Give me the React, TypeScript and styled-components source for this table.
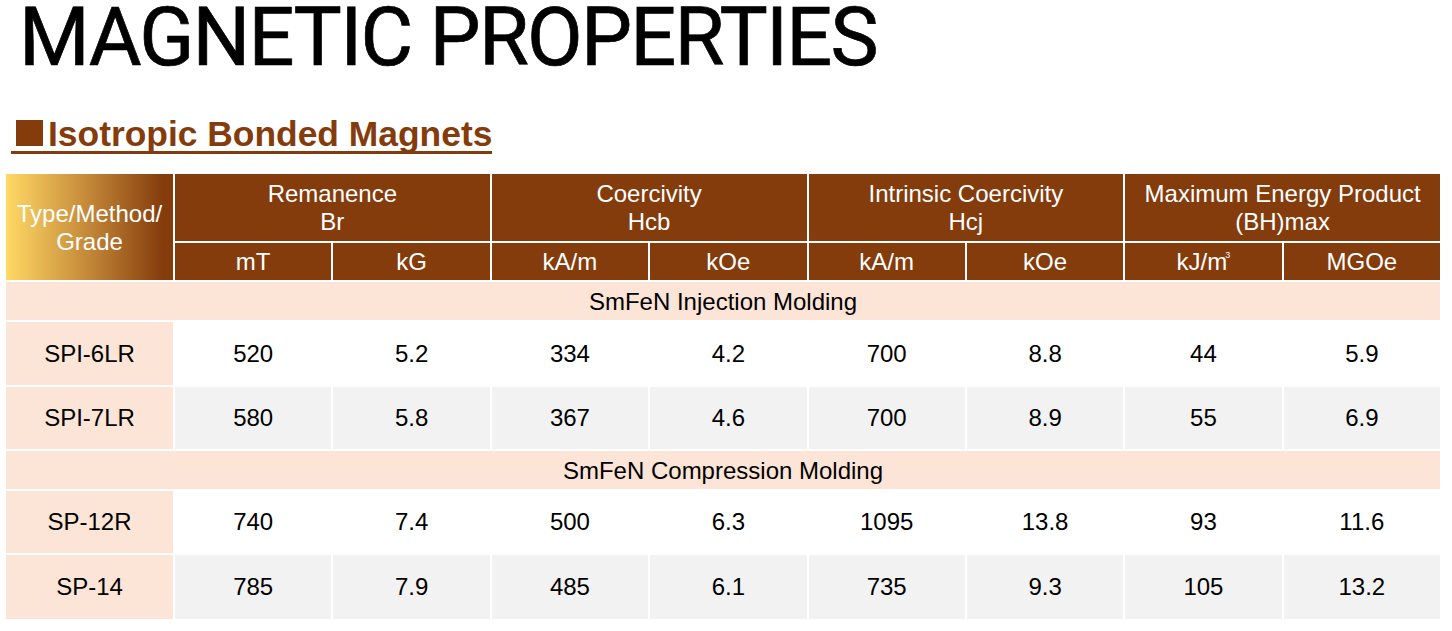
import React from "react";
import styled, { createGlobalStyle } from "styled-components";

const Global = createGlobalStyle`
  html, body { margin: 0; padding: 0; background: #ffffff; }
  body { font-family: "Liberation Sans", Arial, sans-serif; }
`;

const BROWN = "#843c0c";
const PINK = "#fce4d6";
const GRAY = "#f2f2f2";

const Page = styled.div`
  width: 1452px;
  height: 631px;
  overflow: hidden;
  display: flex;
  flex-direction: column;
  align-items: flex-start;
`;

const Title = styled.h1`
  margin: 0 0 0 19px;
  font-family: Roboto, "Liberation Sans", sans-serif;
  font-weight: 400;
  font-size: 81px;
  line-height: 75px;
  letter-spacing: -1.8px;
  color: #000;
  -webkit-text-stroke: 0.7px #000;
`;

const Subtitle = styled.h2`
  margin: 42px 0 0 11px;
  padding-left: 5px;
  display: inline-flex;
  align-items: baseline;
  font-family: "Liberation Sans", Arial, sans-serif;
  font-weight: 700;
  font-size: 35.4px;
  line-height: 34px;
  color: ${BROWN};
  border-bottom: 3px solid ${BROWN};
`;

const Square = styled.span`
  display: inline-block;
  width: 27px;
  height: 26px;
  margin-right: 5px;
  background: ${BROWN};
`;

const Table = styled.div`
  margin: 20px 0 0 6px;
  width: 1434px;
  display: grid;
  grid-template-columns: 167px repeat(8, 1fr);
  grid-template-rows: 67px 37px 38px 63px 62px 38px 62px 64px;
  gap: 2px;
  font-family: "Liberation Sans", Arial, sans-serif;
  font-size: 24px;
`;

const Cell = styled.div`
  display: flex;
  align-items: center;
  justify-content: center;
  text-align: center;
  line-height: 28px;
`;

const HeadCell = styled(Cell)<{ $span?: number }>`
  background: ${BROWN};
  color: #fff;
  grid-column: span ${(p) => p.$span ?? 1};
`;

const CornerCell = styled(Cell)`
  grid-row: span 2;
  color: #fff;
  background: linear-gradient(90deg, #ffd966 0%, #c98f3c 45%, ${BROWN} 94%);
  padding-top: 2px;
`;

const SectionCell = styled(Cell)`
  grid-column: 1 / -1;
  background: ${PINK};
  color: #000;
  padding-top: 1px;
`;

const GradeCell = styled(Cell)`
  background: ${PINK};
  color: #000;
`;

const ValueCell = styled(Cell)<{ $shade: boolean }>`
  background: ${(p) => (p.$shade ? GRAY : "#ffffff")};
  color: #000;
`;

const Sup = styled.sup`
  position: relative;
  top: -6px;
  font-size: 9px;
  line-height: 9px;
  vertical-align: top;
  margin-left: -2px;
`;

const groups = [
  ["Remanence", "Br"],
  ["Coercivity", "Hcb"],
  ["Intrinsic Coercivity", "Hcj"],
  ["Maximum Energy Product", "(BH)max"],
];

const units: React.ReactNode[] = [
  "mT",
  "kG",
  "kA/m",
  "kOe",
  "kA/m",
  "kOe",
  <>
    kJ/m<Sup>3</Sup>
  </>,
  "MGOe",
];

const sections = [
  {
    name: "SmFeN Injection Molding",
    rows: [
      ["SPI-6LR", "520", "5.2", "334", "4.2", "700", "8.8", "44", "5.9"],
      ["SPI-7LR", "580", "5.8", "367", "4.6", "700", "8.9", "55", "6.9"],
    ],
  },
  {
    name: "SmFeN Compression Molding",
    rows: [
      ["SP-12R", "740", "7.4", "500", "6.3", "1095", "13.8", "93", "11.6"],
      ["SP-14", "785", "7.9", "485", "6.1", "735", "9.3", "105", "13.2"],
    ],
  },
];

export default function App() {
  return (
    <>
      <Global />
      <Page>
        <Title>MAGNETIC PROPERTIES</Title>
        <Subtitle>
          <Square />
          Isotropic Bonded Magnets
        </Subtitle>
        <Table>
          <CornerCell>
            Type/Method/
            <br />
            Grade
          </CornerCell>
          {groups.map(([a, b]) => (
            <HeadCell key={a} $span={2}>
              {a}
              <br />
              {b}
            </HeadCell>
          ))}
          {units.map((u, i) => (
            <HeadCell key={i}>{u}</HeadCell>
          ))}
          {sections.map((s) => (
            <React.Fragment key={s.name}>
              <SectionCell>{s.name}</SectionCell>
              {s.rows.map((r, ri) => (
                <React.Fragment key={r[0]}>
                  <GradeCell>{r[0]}</GradeCell>
                  {r.slice(1).map((v, vi) => (
                    <ValueCell key={vi} $shade={ri % 2 === 1}>
                      {v}
                    </ValueCell>
                  ))}
                </React.Fragment>
              ))}
            </React.Fragment>
          ))}
        </Table>
      </Page>
    </>
  );
}
